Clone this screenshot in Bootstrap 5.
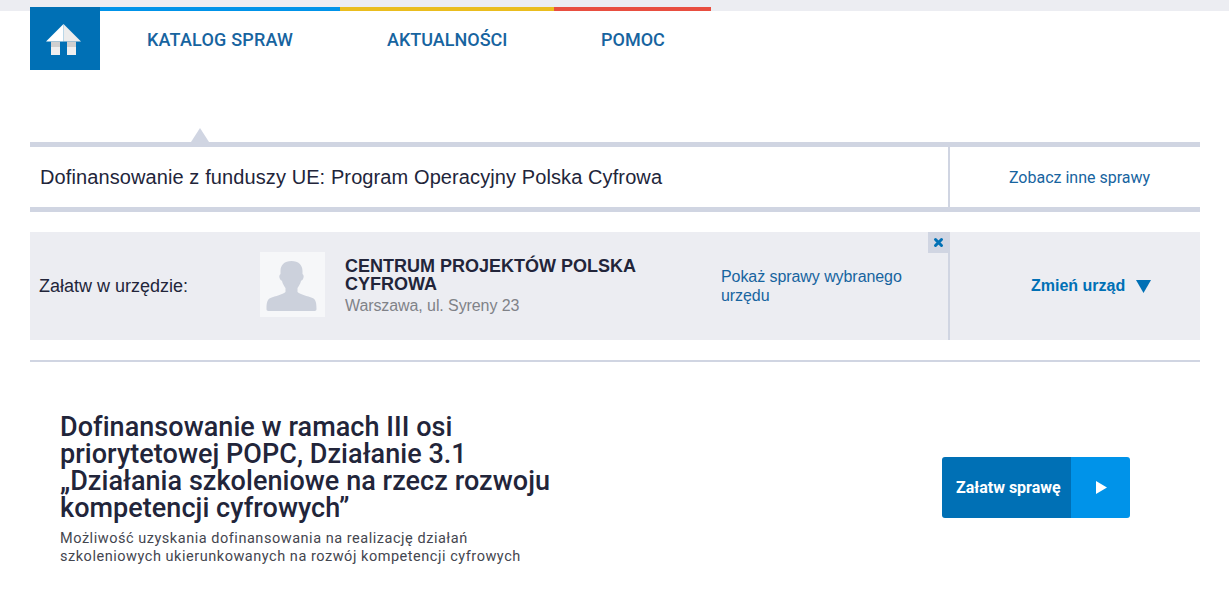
<!DOCTYPE html>
<html lang="pl">
<head>
  <meta charset="UTF-8" />
  <title>Dofinansowanie z funduszy UE</title>
  <link href="https://cdn.jsdelivr.net/npm/bootstrap@5.3.0/dist/css/bootstrap.min.css" rel="stylesheet">
  <style>
    body { font-family: "Liberation Sans", Arial, sans-serif; color: #22253a; background: #fff; }
    a { text-decoration: none; color: #0070b5; }
    .top-strip { height: 11px; background: #ecedf2; }
    .page-wrap { padding: 0 29px 0 30px; }

    .main-head { margin-top: -4px; height: 135px; }
    .home-box { width: 70px; height: 63px; padding: 2px 3px 0 0; background: #0070b5; }
    .menu-link { display: block; padding: 20px 0 0 47px; border-top: 4px solid; font: 500 18px/1 Roboto, sans-serif; color: #17649f; text-transform: uppercase; }
    .menu-blue { border-color: #0093e9; width: 240px; letter-spacing: .2px; }
    .menu-yellow { border-color: #eabd1e; width: 214px; }
    .menu-red { border-color: #e84e40; width: 157px; }

    .case-bar { position: relative; border-top: 5px solid #d0d5e2; border-bottom: 5px solid #d0d5e2; height: 70px; }
    .case-bar::before { content: ""; position: absolute; left: 161px; top: -19px; border-left: 9px solid transparent; border-right: 9px solid transparent; border-bottom: 14px solid #d0d5e2; }
    .case-title { width: 920px; padding-left: 10px; font-size: 20px; letter-spacing: .1px; border-right: 2px solid #d0d5e2; }
    .case-other { flex: 1; padding-left: 9px; font: 400 16px Roboto, sans-serif; color: #17649f; }

    .office-panel { position: relative; margin-top: 20px; height: 108px; background: #ecedf2; }
    .office-label { width: 230px; padding-left: 9px; font-size: 18px; }
    .office-photo { width: 65px; height: 65px; margin-bottom: 3px; background: #f6f7f9; }
    .office-info { width: 396px; padding: 2px 50px 0 20px; }
    .office-name { font-size: 18px; font-weight: 700; line-height: 18px; text-transform: uppercase; }
    .office-addr { font-size: 16px; line-height: 22px; color: #808288; margin-top: 2px; letter-spacing: -.09px; }
    .office-show { width: 227px; padding-right: 30px; font-size: 16px; line-height: 19px; letter-spacing: -.07px; color: #17649f; }
    .office-close { position: absolute; left: 898px; top: 0; width: 20px; height: 21px; background: #d0d5e2; }
    .office-change { flex: 1; align-self: stretch; border-left: 2px solid #d0d5e2; padding-left: 81px; font-size: 16px; font-weight: 700; gap: 11px; }

    .rule-line { height: 2px; margin-top: 20px; background: #d0d5e2; }

    .service-row { padding: 52px 70px 0 30px; }
    .service-text { width: 500px; }
    .service-title { font: 500 27px/27px Roboto, sans-serif; letter-spacing: .05px; margin: 0; color: #22253a; }
    .service-desc { font: 400 14.500px/18px Roboto, sans-serif; margin: 8px 0 0; color: #44464f; letter-spacing: .53px; }
    .go-btn { width: 188px; height: 61px; margin-top: 43px; border-radius: 3px; overflow: hidden; color: #fff; font: 700 16px Roboto, sans-serif; }
    .go-label { width: 129px; background: #0070b5; padding-left: 14px; }
    .go-arrow { flex: 1; padding-left: 2px; background: #0093e9; }
  </style>
  <script src="https://cdn.jsdelivr.net/npm/bootstrap@5.3.0/dist/js/bootstrap.bundle.min.js"></script>
</head>
<body>
  <div class="top-strip"></div>
  <div class="page-wrap">
    <header class="main-head d-flex align-items-start">
      <a class="home-box d-flex align-items-center justify-content-center" href="#" aria-label="Start">
        <svg width="35" height="31" viewBox="0 0 35 31">
          <path d="M17.500 0 35 17.500H17.500z" fill="#ececec"/>
          <path d="M17.500 0 0 17.500H17.500z" fill="#fff"/>
          <path d="M5 17.500h9V23H5zM21 17.500h9V23h-9z" fill="#cfcfcf"/>
          <path d="M5 23h9v8H5zM21 23h9v8h-9z" fill="#efefef"/>
        </svg>
      </a>
      <nav class="d-flex">
        <a class="menu-link menu-blue" href="#">Katalog spraw</a>
        <a class="menu-link menu-yellow" href="#">Aktualności</a>
        <a class="menu-link menu-red" href="#">Pomoc</a>
      </nav>
    </header>

    <div class="case-bar d-flex align-items-stretch">
      <div class="case-title d-flex align-items-center">Dofinansowanie z funduszy UE: Program Operacyjny Polska Cyfrowa</div>
      <a class="case-other d-flex align-items-center justify-content-center" href="#">Zobacz inne sprawy</a>
    </div>

    <div class="office-panel d-flex align-items-center">
      <div class="office-label">Załatw w urzędzie:</div>
      <div class="office-photo flex-shrink-0">
        <svg class="d-block" width="65" height="65" viewBox="0 0 65 65">
          <path d="M31.500 9c7 0 11 4 11 10v3c1.500 1 1.500 3 .5 5-.5 1-1.500 1.500-2 2-.7 3-2.500 5.500-3.500 7v4c3 2.500 10 4 15 6 3 1.500 4 4 4 11 0 1-.5 2-2 2H8.500c-1.500 0-2-1-2-2 0-7 1-9.500 4-11 5-2 12-3.500 15-6v-4c-1-1.500-2.800-4-3.500-7-.5-.5-1.500-1-2-2-1-2-1-4 .5-5v-3c0-6 4-10 11-10z" fill="#ccd1dc"/>
        </svg>
      </div>
      <div class="office-info flex-shrink-0">
        <div class="office-name">Centrum Projektów Polska Cyfrowa</div>
        <div class="office-addr">Warszawa, ul. Syreny 23</div>
      </div>
      <a class="office-show flex-shrink-0" href="#">Pokaż sprawy wybranego urzędu</a>
      <a class="office-close d-flex align-items-center justify-content-center" href="#" aria-label="Zamknij">
        <svg width="11" height="11" viewBox="0 0 11 11"><path d="M2.500 2.500 8.500 8.500M8.500 2.500 2.500 8.500" stroke="#0070b5" stroke-width="3" stroke-linecap="round"/></svg>
      </a>
      <a class="office-change d-flex align-items-center" href="#">
        Zmień urząd
        <svg width="15" height="13" viewBox="0 0 15 13"><path d="M0 0h15L7.500 13z" fill="#0070b5"/></svg>
      </a>
    </div>

    <div class="rule-line"></div>

    <section class="service-row d-flex justify-content-between align-items-start">
      <div class="service-text">
        <h1 class="service-title">Dofinansowanie w ramach III osi priorytetowej POPC, Działanie 3.1 „Działania szkoleniowe na rzecz rozwoju kompetencji cyfrowych”</h1>
        <p class="service-desc">Możliwość uzyskania dofinansowania na realizację działań<br>szkoleniowych ukierunkowanych na rozwój kompetencji cyfrowych</p>
      </div>
      <a class="go-btn d-flex" href="#">
        <span class="go-label d-flex align-items-center">Załatw sprawę</span>
        <span class="go-arrow d-flex align-items-center justify-content-center">
          <svg width="11" height="13" viewBox="0 0 11 13"><path d="M0 0 11 6.500 0 13z" fill="#fff"/></svg>
        </span>
      </a>
    </section>
  </div>
</body>
</html>
